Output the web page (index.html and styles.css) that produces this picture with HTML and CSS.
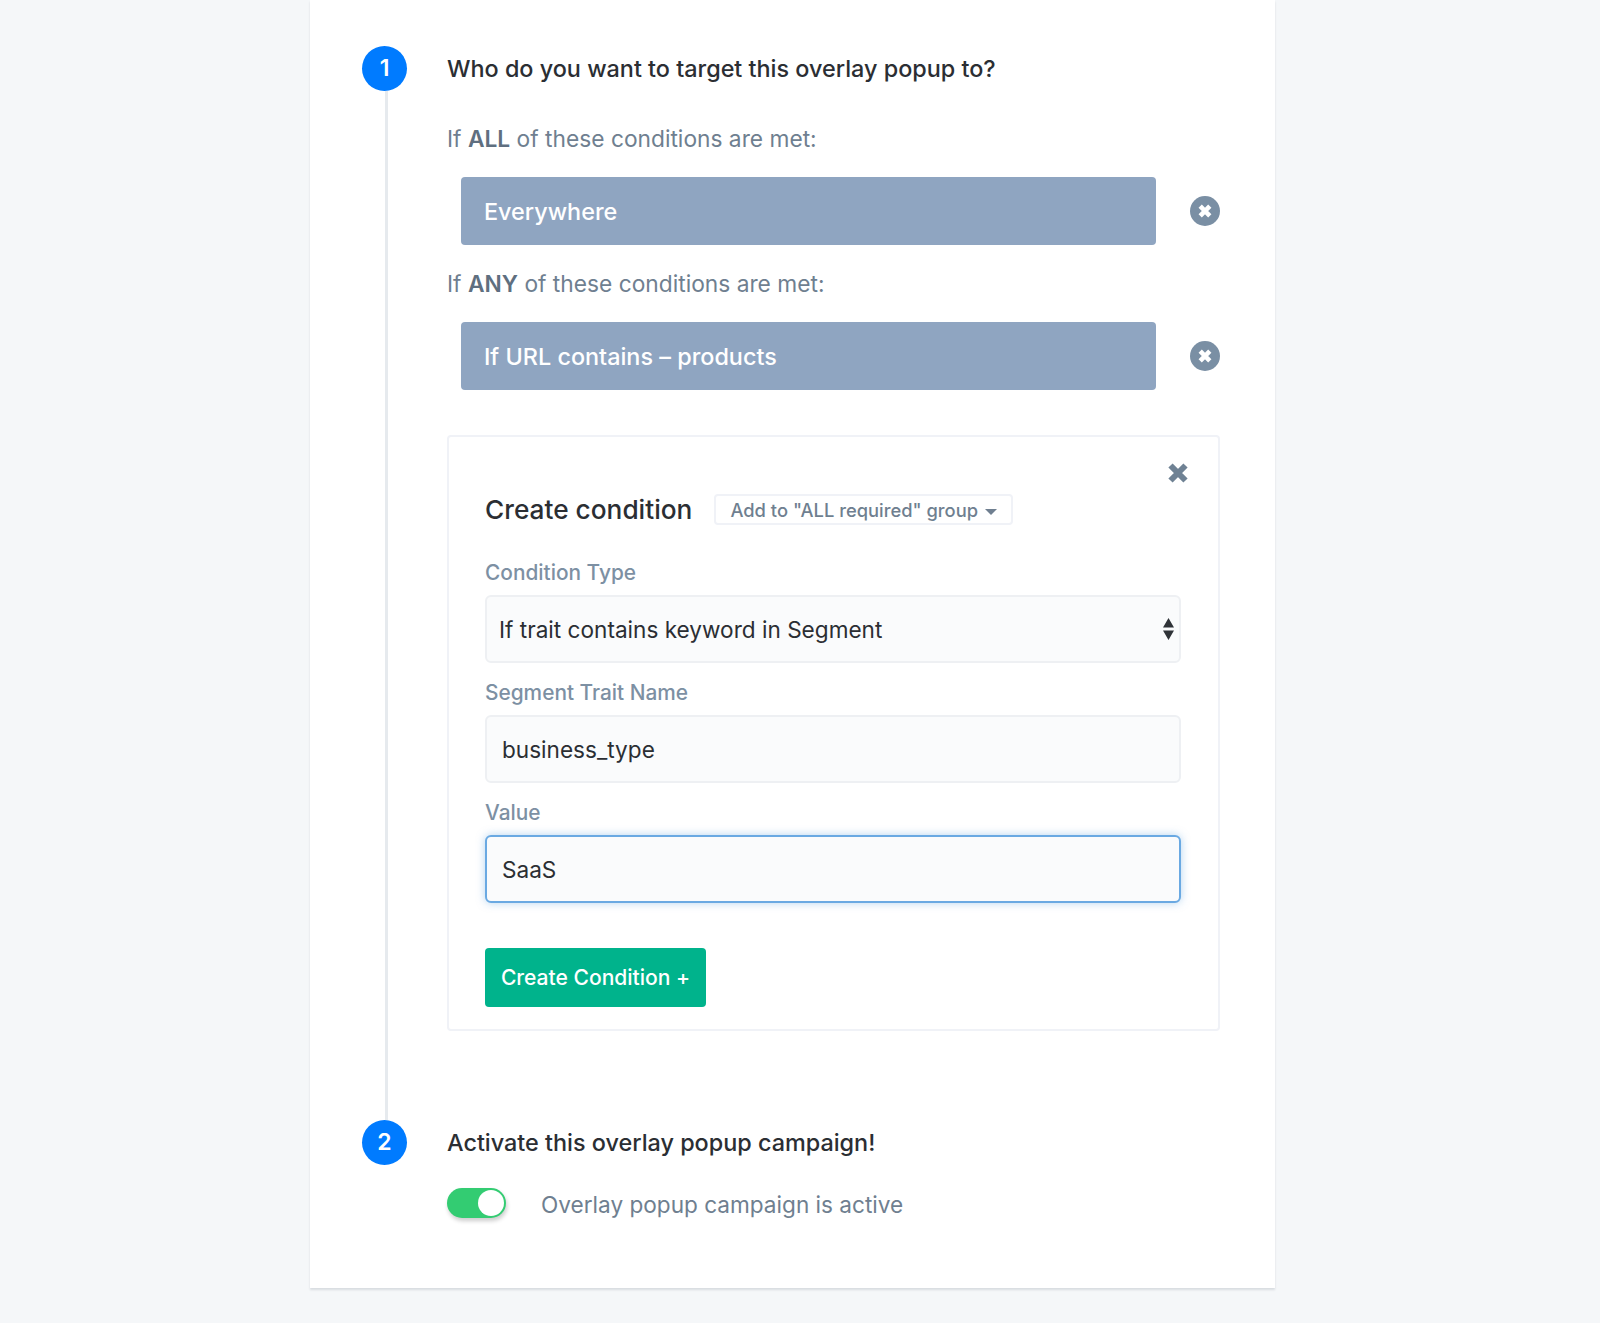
FILE: index.html
```html
<!DOCTYPE html>
<html lang="en">
<head>
    <meta charset="UTF-8">
    <meta name="viewport" content="width=device-width, initial-scale=1.0">
    <title>Overlay popup targeting</title>
    <link rel="stylesheet" href="styles.css">
</head>
<body>
    <div class="card">
        <div class="step step-first">
            <div class="step-marker">
                <div class="step-number">1</div>
                <div class="step-line"></div>
            </div>
            <div class="step-body">
                <h2 class="step-title">Who do you want to target this overlay popup to?</h2>

                <p class="group-label group-label-first">If <b>ALL</b> of these conditions are met:</p>
                <div class="condition-row">
                    <div class="condition-bar">Everywhere</div>
                    <button class="remove-button" aria-label="Remove">
                        <svg viewBox="0 0 30 30" width="30" height="30"><circle cx="15" cy="15" r="15" fill="#7a8fa4"/><path d="M10.2 10.2l9.6 9.6M19.8 10.2l-9.6 9.6" stroke="#fff" stroke-width="4.6" fill="none"/></svg>
                    </button>
                </div>

                <p class="group-label">If <b>ANY</b> of these conditions are met:</p>
                <div class="condition-row">
                    <div class="condition-bar">If URL contains – products</div>
                    <button class="remove-button" aria-label="Remove">
                        <svg viewBox="0 0 30 30" width="30" height="30"><circle cx="15" cy="15" r="15" fill="#7a8fa4"/><path d="M10.2 10.2l9.6 9.6M19.8 10.2l-9.6 9.6" stroke="#fff" stroke-width="4.6" fill="none"/></svg>
                    </button>
                </div>

                <div class="panel">
                    <button class="panel-close" aria-label="Close">
                        <svg viewBox="0 0 20 20" width="20" height="20"><path d="M2.5 2.5l15 15M17.5 2.5l-15 15" stroke="#6f8294" stroke-width="6" fill="none"/></svg>
                    </button>
                    <div class="panel-header">
                        <h3 class="panel-title">Create condition</h3>
                        <button class="group-button">Add to "ALL required" group <span class="caret"></span></button>
                    </div>

                    <label class="field-label field-label-first">Condition Type</label>
                    <div class="select-wrap">
                        <select class="field-input field-select">
                            <option>If trait contains keyword in Segment</option>
                        </select>
                        <svg class="select-arrows" viewBox="0 0 11 22" width="11" height="22"><path d="M5.5 0L11 9.5H0zM0 12.5h11L5.5 22z" fill="#2f3338"/></svg>
                    </div>

                    <label class="field-label">Segment Trait Name</label>
                    <input class="field-input" type="text" value="business_type">

                    <label class="field-label">Value</label>
                    <input class="field-input field-focused" type="text" value="SaaS">

                    <button class="create-button">Create Condition +</button>
                </div>
            </div>
        </div>

        <div class="step step-last">
            <div class="step-marker">
                <div class="step-number">2</div>
            </div>
            <div class="step-body">
                <h2 class="step-title">Activate this overlay popup campaign!</h2>
                <div class="toggle-row">
                    <div class="toggle"><div class="toggle-knob"></div></div>
                    <span class="toggle-label">Overlay popup campaign is active</span>
                </div>
            </div>
        </div>
    </div>
</body>
</html>
```

FILE: styles.css
```css
* {
    box-sizing: border-box;
}

body {
    font-family: Inter, "Liberation Sans", sans-serif;
    background-color: #f5f7f9;
    margin: 0;
    height: 1323px;
    overflow: hidden;
}

button {
    font-family: inherit;
}

.card {
    background-color: white;
    width: 965px;
    height: 1288px;
    margin-left: 310px;
    padding: 46px 0 0 52px;
    box-shadow: 0 2px 2px #d8dce0;
}

.step {
    display: flex;
    gap: 40px;
}

.step-first {
    height: 1074px;
}

.step-marker {
    width: 45px;
    display: flex;
    flex-direction: column;
    flex-shrink: 0;
}

.step-number {
    width: 45px;
    height: 45px;
    border-radius: 50%;
    background-color: #007bff;
    color: white;
    font-size: 23px;
    font-weight: 600;
    line-height: 45px;
    text-align: center;
}

.step-line {
    flex: 1;
    width: 3px;
    margin-left: 23px;
    background-color: #e6eaee;
}

.step-body {
    width: 773px;
}

.step-title {
    font-size: 23.4px;
    font-weight: 500;
    line-height: 45px;
    color: #2b2e33;
    margin: 0;
}

.group-label {
    font-size: 22.75px;
    line-height: 30px;
    color: #6f7f90;
    margin: 24px 0 23px;
}

.group-label-first {
    margin-top: 33px;
}

.group-label b {
    font-weight: 600;
    color: #5f6f80;
}

.condition-row {
    display: flex;
    align-items: center;
    gap: 34px;
    margin-left: 14px;
}

.condition-bar {
    width: 695px;
    height: 68px;
    background-color: #8fa5c1;
    border-radius: 4px;
    color: white;
    font-size: 23.4px;
    font-weight: 500;
    line-height: 70px;
    padding-left: 23px;
}

.remove-button {
    width: 30px;
    height: 30px;
    padding: 0;
    border: none;
    background: none;
}

.panel {
    position: relative;
    height: 596px;
    margin-top: 45px;
    padding: 57px 37px 0 36px;
    border: 2px solid #f0f2f7;
    border-radius: 4px;
}

.panel-close {
    position: absolute;
    top: 26px;
    right: 30px;
    width: 20px;
    height: 20px;
    padding: 0;
    border: none;
    background: none;
}

.panel-header {
    display: flex;
    align-items: center;
    gap: 22px;
}

.panel-title {
    font-size: 26.25px;
    font-weight: 500;
    color: #2b2e33;
    margin: 0;
}

.group-button {
    height: 31px;
    padding: 0 14px;
    background: white;
    border: 2px solid #f0f2f7;
    border-radius: 4px;
    color: #6f7f90;
    font-size: 18.35px;
    font-weight: 500;
}

.caret {
    display: inline-block;
    width: 0;
    height: 0;
    margin-left: 2px;
    vertical-align: 2px;
    border-left: 6px solid transparent;
    border-right: 6px solid transparent;
    border-top: 6px solid #6f7f90;
}

.field-label {
    display: block;
    font-size: 20.85px;
    font-weight: 500;
    line-height: 26px;
    color: #7d90a3;
    margin: 17px 0 9px;
}

.field-label-first {
    margin-top: 35px;
}

.field-input {
    display: block;
    width: 100%;
    height: 68px;
    padding: 0 15px;
    background-color: #fafbfc;
    border: 2px solid #eef0f3;
    border-radius: 6px;
    color: #2b2e33;
    font-family: inherit;
    font-size: 22.6px;
    outline: none;
}

.field-select {
    appearance: none;
    padding-left: 12px;
}

.field-focused {
    border-color: #6aa9e2;
    box-shadow: 0 0 9px rgba(106, 169, 226, 0.5);
}

.select-wrap {
    position: relative;
}

.select-arrows {
    position: absolute;
    top: 23px;
    right: 7px;
}

.create-button {
    display: block;
    width: 221px;
    height: 59px;
    margin-top: 45px;
    padding: 0;
    border: none;
    border-radius: 4px;
    background-color: #00b38c;
    color: white;
    font-size: 21.05px;
    font-weight: 500;
}

.toggle-row {
    display: flex;
    align-items: flex-start;
    gap: 35px;
    margin-top: 23px;
}

.toggle {
    position: relative;
    width: 59px;
    height: 30px;
    border-radius: 15px;
    background-color: #33cc72;
    box-shadow: 1px 3px 4px rgba(0, 0, 0, 0.2);
}

.toggle-knob {
    position: absolute;
    top: 2px;
    right: 2px;
    width: 26px;
    height: 26px;
    border-radius: 50%;
    background-color: white;
}

.toggle-label {
    font-size: 22.6px;
    line-height: 30px;
    margin-top: 2px;
    color: #6f7f90;
}
```
